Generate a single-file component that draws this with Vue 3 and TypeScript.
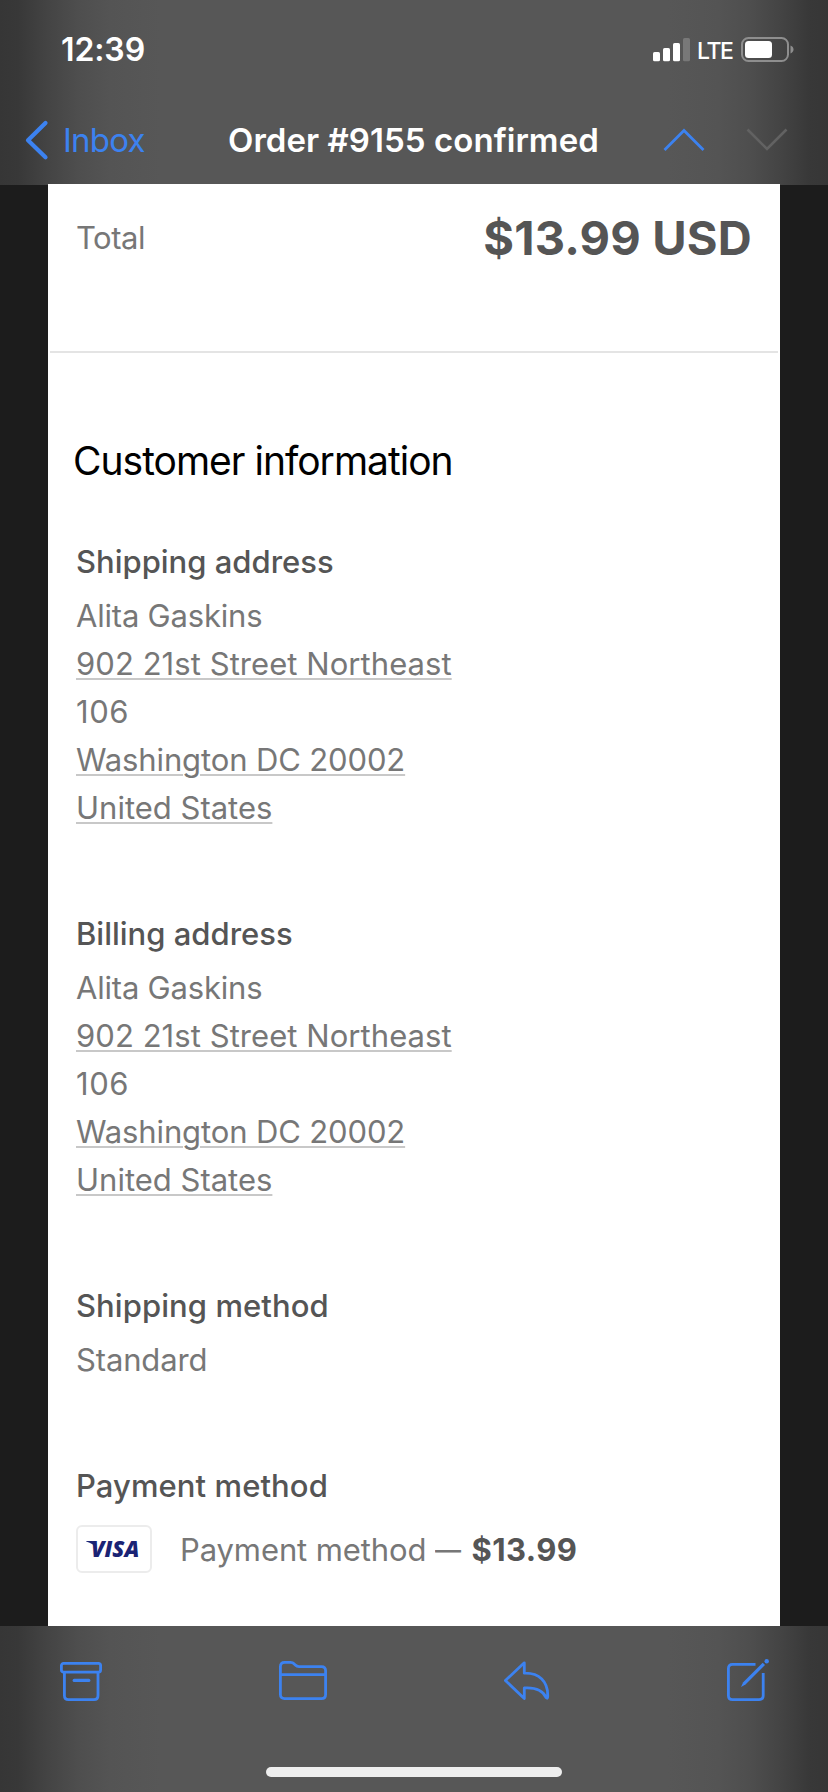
<script setup lang="ts">
interface Line {
  text: string
  link?: boolean
  cls?: string
}
interface Section {
  title: string
  cls: string
  lines: Line[]
}

const address: Line[] = [
  { text: 'Alita Gaskins', cls: 'name' },
  { text: '902 21st Street Northeast', link: true, cls: 'street' },
  { text: '106', cls: 'unit' },
  { text: 'Washington DC 20002', link: true, cls: 'city' },
  { text: 'United States', link: true, cls: 'country' },
]

const sections: Section[] = [
  { title: 'Shipping address', cls: 't-ship', lines: address },
  { title: 'Billing address', cls: 't-bill', lines: address },
  { title: 'Shipping method', cls: 't-method', lines: [{ text: 'Standard', cls: 'standard' }] },
]
</script>

<template>
  <div class="screen">
    <header class="top">
      <div class="status">
        <span class="time">12:39</span>
        <div class="indicators">
          <svg class="signal" width="38" height="24" viewBox="0 0 38 24">
            <rect x="0" y="14" width="7" height="9.3" rx="1.6" fill="#fff" />
            <rect x="10" y="10" width="7" height="13.3" rx="1.6" fill="#fff" />
            <rect x="20" y="5" width="7" height="18.3" rx="1.6" fill="#fff" />
            <rect x="30" y="0" width="7" height="23.3" rx="1.6" fill="#787878" />
          </svg>
          <span class="lte">LTE</span>
          <svg class="battery" width="54" height="26" viewBox="0 0 54 26">
            <rect x="1" y="1" width="46" height="23" rx="6.5" fill="none" stroke="#8e8e8e" stroke-width="2" />
            <rect x="4" y="4" width="27" height="17" rx="3.5" fill="#fff" />
            <path d="M49.500 8.500c2 .7 3 2.300 3 4s-1 3.300-3 4z" fill="#8e8e8e" />
          </svg>
        </div>
      </div>
      <nav class="nav">
        <svg class="back" width="24" height="40" viewBox="0 0 24 40">
          <path d="M21.500 3L4 20.300L21.500 37.300" fill="none" stroke="#3c82f0" stroke-width="4.200" stroke-linecap="round" stroke-linejoin="round" />
        </svg>
        <span class="inbox">Inbox</span>
        <h1 class="title">Order #9155 confirmed</h1>
        <svg class="up" width="42" height="24" viewBox="0 0 42 24">
          <path d="M1.500 22L21 2.500L40.500 22" fill="none" stroke="#3c82f0" stroke-width="2.800" />
        </svg>
        <svg class="down" width="42" height="24" viewBox="0 0 42 24">
          <path d="M1.500 1.500L21 21L40.500 1.500" fill="none" stroke="#626262" stroke-width="2.600" />
        </svg>
      </nav>
    </header>

    <main class="body">
      <article class="mail">
        <div class="total">
          <span class="total-label">Total</span>
          <strong class="amount">$13.99 USD</strong>
        </div>
        <div class="content">
          <h2 class="heading">Customer information</h2>
          <section v-for="s in sections" :key="s.title" class="section">
            <h3 class="sub" :class="s.cls">{{ s.title }}</h3>
            <p v-for="l in s.lines" :key="l.text" class="line">
              <span :class="[l.cls, { link: l.link }]">{{ l.text }}</span>
            </p>
          </section>
          <section class="section">
            <h3 class="sub t-pay">Payment method</h3>
            <div class="payment">
              <span class="card">
                <svg width="74" height="46" viewBox="0 0 74 46">
                  <path d="M9.200 15H15.500Q17.800 15 18.300 17.500L19.500 23Q16.500 17.500 9.200 15.600Z" fill="#1a2374" />
                  <text x="14" y="31" class="visa" fill="#1a2374">VISA</text>
                </svg>
              </span>
              <span class="pay-text">Payment method <span class="dash">—</span></span>
              <strong class="pay-amount">$13.99</strong>
            </div>
          </section>
        </div>
      </article>
    </main>

    <footer class="bottom">
      <div class="tools">
        <svg width="42" height="44" viewBox="0 0 42 44">
          <g fill="none" stroke="#3c82f0" stroke-width="2.800" stroke-linejoin="round">
            <rect x="1.400" y="5.400" width="39.200" height="8.800" rx="2.200" />
            <path d="M4.400 14.200V37.500Q4.400 41.600 8.500 41.600H34Q38 41.600 38 37.500V14.200" />
            <path d="M14.200 22.400H28.800" stroke-width="3.200" stroke-linecap="round" />
          </g>
        </svg>
        <svg width="48" height="44" viewBox="0 0 48 44">
          <g fill="none" stroke="#3c82f0" stroke-width="2.800" stroke-linejoin="round">
            <path d="M1.400 36.500V8.700Q1.400 4.400 5.600 4.400H11.500Q13.800 4.400 15.300 6L16.300 7Q17.800 8.600 20 8.600H42.500Q46.600 8.600 46.600 12.800V36.500Q46.600 40.600 42.500 40.600H5.600Q1.400 40.600 1.400 36.500Z" />
            <path d="M1.400 16.600H46.600" />
          </g>
        </svg>
        <svg width="46" height="44" viewBox="0 0 46 44">
          <path d="M20.300 4.800L1.400 22.500L20.300 40.500V30C32 29.300 39 32.500 42.300 39.800Q43.700 41 43.700 38.500C44.300 23 35 14.800 20.300 15.200Z" fill="none" stroke="#3c82f0" stroke-width="2.800" stroke-linejoin="round" />
        </svg>
        <svg width="42" height="44" viewBox="0 0 42 44">
          <path d="M28.500 6.400H5.500Q1.400 6.400 1.400 10.500V37.500Q1.400 41.600 5.500 41.600H32Q36.200 41.600 36.200 37.500V15" fill="none" stroke="#3c82f0" stroke-width="2.800" />
          <path d="M35.700 4.800L38 7.100L18.500 26.600L14 29L16.200 24.300Z" fill="#3c82f0" />
          <circle cx="39.700" cy="3.200" r="2.200" fill="#3c82f0" />
        </svg>
      </div>
      <div class="home"></div>
    </footer>
  </div>
</template>

<style>
body {
  margin: 0;
  background: #1c1c1c;
}
</style>

<style scoped>
.screen {
  display: flex;
  flex-direction: column;
  width: 828px;
  height: 1792px;
  overflow: hidden;
  background: #1c1c1c;
  font-family: Inter, 'Liberation Sans', sans-serif;
  white-space: nowrap;
}
h1,
h2,
h3,
p {
  margin: 0;
}
svg {
  display: block;
  flex: none;
  overflow: visible;
}
.top,
.bottom {
  box-sizing: border-box;
  flex: none;
  background: linear-gradient(90deg, #363636 0, #383838 18px, #444 48px, #4e4e4e 78px, #545454 110px, #575757 160px, #575757 668px, #545454 718px, #4e4e4e 750px, #444 780px, #383838 810px, #363636 100%);
}
.top {
  height: 185px;
}
.status {
  display: flex;
  justify-content: space-between;
  height: 94px;
  padding: 0 33px 0 61px;
  color: #fff;
}
.time {
  margin-top: 31px;
  font-size: 32px;
  line-height: 38px;
  font-weight: 600;
  letter-spacing: -0.1px;
}
.indicators {
  display: flex;
}
.signal {
  margin: 38px 6px 0 0;
}
.lte {
  width: 44px;
  margin-top: 36px;
  font-size: 23px;
  line-height: 30px;
  font-weight: 500;
  letter-spacing: -1.4px;
}
.battery {
  margin: 37px 0 0;
}
.nav {
  display: flex;
  height: 91px;
}
.back {
  margin: 26px 0 0 24px;
}
.inbox {
  width: 165px;
  margin: 26px 0 0 15px;
  color: #3c82f0;
  font-size: 33px;
  line-height: 40px;
  letter-spacing: -0.75px;
}
.title {
  width: 435px;
  margin-top: 26px;
  color: #fff;
  font-size: 33px;
  line-height: 40px;
  font-weight: 600;
  letter-spacing: 0.05px;
}
.up {
  margin: 34px 41px 0 0;
}
.down {
  margin-top: 34px;
}
.body {
  flex: 1;
  padding: 0 48px;
}
.mail {
  position: relative;
  height: 1442px;
  margin-top: -1px;
  background: #fff;
}
.total {
  box-sizing: border-box;
  display: flex;
  justify-content: space-between;
  height: 169px;
  margin: 0 2px;
  padding: 25px 26px 0 26px;
  border-bottom: 2px solid #e4e4e4;
}
.total-label {
  margin-top: 5px;
  color: #777;
  font-size: 31px;
  line-height: 48px;
  letter-spacing: -0.5px;
}
.amount {
  color: #555;
  font-size: 47px;
  line-height: 58px;
  font-weight: 700;
  letter-spacing: 0.2px;
}
.content {
  padding: 84px 0 0 28px;
}
.heading {
  margin: 0 0 58px -3px;
  color: #000;
  font-size: 39px;
  line-height: 48px;
  font-weight: 400;
  letter-spacing: -1px;
}
.section + .section {
  margin-top: 83px;
}
.sub {
  margin-bottom: 11px;
  color: #555;
  font-size: 31px;
  line-height: 38px;
  font-weight: 500;
}
.t-method,
.t-pay {
  letter-spacing: 0.08px;
}
.line {
  height: 48px;
  color: #777;
  font-size: 31px;
  line-height: 48px;
}
.name {
  letter-spacing: -0.2px;
}
.street {
  letter-spacing: 0.06px;
}
.unit {
  letter-spacing: 0.6px;
}
.city {
  letter-spacing: -0.13px;
}
.standard {
  letter-spacing: -0.15px;
}
.link {
  text-decoration: underline;
  text-decoration-color: #c8c8c8;
  text-decoration-thickness: 2px;
  text-underline-offset: 3px;
}
.payment {
  display: flex;
  height: 48px;
  margin-top: 20px;
  color: #777;
  font-size: 31px;
  line-height: 50px;
}
.card {
  box-sizing: border-box;
  width: 76px;
  height: 48px;
  border: 2px solid #ececec;
  border-radius: 6px;
}
.card svg {
  margin: -1px;
}
.visa {
  font-family: 'Open Sans', sans-serif;
  font-size: 22px;
  font-weight: 800;
  font-style: italic;
}
.pay-text {
  width: 291.5px;
  margin-left: 28px;
  letter-spacing: -0.1px;
}
.dash {
  display: inline-block;
  transform: scaleX(0.84);
  transform-origin: left;
}
.pay-amount {
  color: #555;
  font-weight: 700;
  letter-spacing: 0.45px;
}
.tools {
  display: flex;
  justify-content: space-between;
  padding: 32px 59px 0 60px;
}
.bottom {
  height: 167px;
}
.home {
  width: 296px;
  height: 10px;
  margin: 65px auto 0;
  border-radius: 5px;
  background: #eee;
}
</style>
